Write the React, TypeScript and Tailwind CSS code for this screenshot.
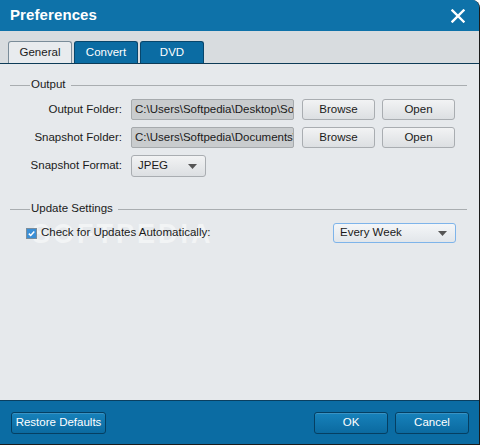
import React from "react";

const font = { fontFamily: '"Liberation Sans", Arial, sans-serif' };

function GrayButton({ children, w }: { children: React.ReactNode; w: string }) {
  return (
    <div
      className={`${w} h-[21px] flex items-center justify-center rounded-[3px] border border-[#a9adb1] bg-gradient-to-b from-[#f2f3f4] to-[#dcdfe2] text-[11.5px] text-[#1a1a1a]`}
    >
      {children}
    </div>
  );
}

function BlueButton({ children, w }: { children: React.ReactNode; w: string }) {
  return (
    <div
      className={`${w} h-[22px] flex items-center justify-center rounded-[3px] border border-[#053f62] bg-gradient-to-b from-[#1782bb] to-[#0b6aa0] text-[11.5px] text-white shadow-[inset_0_1px_0_rgba(255,255,255,0.15)]`}
    >
      {children}
    </div>
  );
}

function Arrow() {
  return (
    <svg width="9" height="5" viewBox="0 0 9 5">
      <path d="M0 0 L9 0 L4.5 5 Z" fill="#555" />
    </svg>
  );
}

export default function App() {
  return (
    <div style={font} className="w-[480px] h-[445px] overflow-hidden bg-white">
      <div className="w-[480px] h-[445px] flex flex-col rounded-tr-[8px] overflow-hidden border-r border-b border-[#1b1b1b] bg-[#0b6ca3]">
        {/* Title bar */}
        <div className="h-[31px] flex items-center justify-between pl-[10px] pr-[14px] bg-[#0e72a9]">
          <span className="text-white font-bold text-[15px] tracking-[0.1px]">Preferences</span>
          <svg width="14" height="14" viewBox="0 0 14 14">
            <path d="M1.5 1.5 L12.5 12.5 M12.5 1.5 L1.5 12.5" stroke="white" strokeWidth="2.4" strokeLinecap="square" />
          </svg>
        </div>
        {/* Tab strip */}
        <div className="h-[33px] bg-[#d8dcdf] flex items-end pl-[8px] gap-[2px] border-b border-[#0d3b57]">
          <div className="w-[64px] h-[22px] rounded-t-[3px] border border-b-0 border-[#7a8c99] bg-[#e8ebee] flex items-center justify-center text-[11.5px] text-[#1a1a1a]">
            General
          </div>
          <div className="w-[64px] h-[22px] rounded-t-[3px] border border-b-0 border-[#07466c] bg-[#0b6ca3] flex items-center justify-center text-[11.5px] text-white">
            Convert
          </div>
          <div className="w-[64px] h-[22px] rounded-t-[3px] border border-b-0 border-[#07466c] bg-[#0b6ca3] flex items-center justify-center text-[11.5px] text-white">
            DVD
          </div>
        </div>
        {/* Content */}
        <div className="flex-1 bg-[#e6e9ec] pl-[10px] pr-[12px] pt-[14px] text-[11.5px] text-[#1a1a1a] relative">
          <div className="absolute left-[32px] top-[150px] text-[27px] font-bold tracking-[3px] text-white/50 pointer-events-none select-none">
            SOFTPEDIA
          </div>
          {/* Output group */}
          <div className="flex items-center h-[14px] relative">
            <div className="w-[20px] h-px bg-[#a9adb0]" />
            <span className="px-[1px]">Output</span>
            <div className="flex-1 h-px bg-[#a9adb0] ml-[4px]" />
          </div>
          <div className="flex flex-col gap-[7px] mt-[7px] relative">
            <div className="flex items-center h-[21px]">
              <div className="w-[113px] text-right pr-[1px]">Output Folder:</div>
              <div className="ml-[8px] w-[163px] h-[21px] flex items-center px-[3px] border border-[#a6aaad] rounded-[2px] bg-[#c9ccce] overflow-hidden whitespace-nowrap">
                C:\Users\Softpedia\Desktop\Soft
              </div>
              <div className="ml-[8px]"><GrayButton w="w-[73px]">Browse</GrayButton></div>
              <div className="ml-[7px]"><GrayButton w="w-[73px]">Open</GrayButton></div>
            </div>
            <div className="flex items-center h-[21px]">
              <div className="w-[113px] text-right pr-[1px]">Snapshot Folder:</div>
              <div className="ml-[8px] w-[163px] h-[21px] flex items-center px-[3px] border border-[#a6aaad] rounded-[2px] bg-[#c9ccce] overflow-hidden whitespace-nowrap">
                C:\Users\Softpedia\Documents\A
              </div>
              <div className="ml-[8px]"><GrayButton w="w-[73px]">Browse</GrayButton></div>
              <div className="ml-[7px]"><GrayButton w="w-[73px]">Open</GrayButton></div>
            </div>
            <div className="flex items-center h-[22px]">
              <div className="w-[113px] text-right pr-[1px]">Snapshot Format:</div>
              <div className="ml-[8px] w-[75px] h-[22px] flex items-center justify-between pl-[6px] pr-[8px] border border-[#a9adb1] rounded-[3px] bg-gradient-to-b from-[#f2f3f4] to-[#dcdfe2]">
                <span>JPEG</span>
                <Arrow />
              </div>
            </div>
          </div>
          {/* Update settings */}
          <div className="flex items-center h-[14px] mt-[25px] relative">
            <div className="w-[20px] h-px bg-[#a9adb0]" />
            <span className="px-[1px]">Update Settings</span>
            <div className="flex-1 h-px bg-[#a9adb0] ml-[4px]" />
          </div>
          <div className="flex items-center justify-between mt-[7px] h-[20px] pl-[16px] relative">
            <div className="flex items-center">
              <div className="w-[11px] h-[11px] border border-[#7a8d9c] bg-white flex items-center justify-center">
                <svg width="9" height="9" viewBox="0 0 9 9">
                  <rect x="0" y="0" width="9" height="9" fill="#3b8fd6" />
                  <path d="M1.8 4.6 L3.7 6.5 L7.3 2.5" stroke="white" strokeWidth="1.5" fill="none" />
                </svg>
              </div>
              <span className="ml-[4px]">Check for Updates Automatically:</span>
            </div>
            <div className="mr-[11px] w-[123px] h-[20px] flex items-center justify-between pl-[6px] pr-[8px] border border-[#7eb4ea] rounded-[3px] bg-gradient-to-b from-[#f4f6f8] to-[#e2e6ea]">
              <span>Every Week</span>
              <Arrow />
            </div>
          </div>
        </div>
        {/* Bottom bar */}
        <div className="h-[44px] flex items-center justify-between pl-[11px] pr-[10px] bg-[#0b6ca3] border-t border-[#0a3f60]">
          <BlueButton w="w-[95px]">Restore Defaults</BlueButton>
          <div className="flex gap-[7px]">
            <BlueButton w="w-[74px]">OK</BlueButton>
            <BlueButton w="w-[74px]">Cancel</BlueButton>
          </div>
        </div>
      </div>
    </div>
  );
}
